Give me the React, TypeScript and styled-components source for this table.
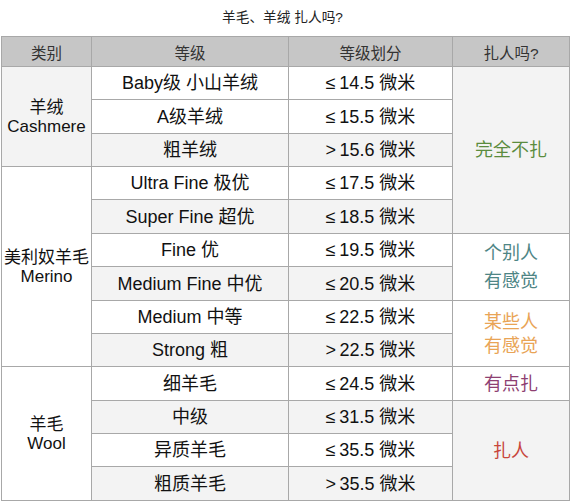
import React from 'react';
import styled, { createGlobalStyle } from 'styled-components';

const GlobalStyle = createGlobalStyle`
    body {
        margin: 0;
        background: #ffffff;
        font-family: "Liberation Sans", "Noto Sans CJK SC", sans-serif;
        color: #111;
    }
`;

const Page = styled.div`
    width: 571px;
    padding-left: 1px;
    box-sizing: border-box;
`;

const Title = styled.div`
    height: 36px;
    line-height: 36px;
    padding-right: 7px;
    text-align: center;
    font-size: 13.7px;
    color: #222;
`;

const Table = styled.div`
    display: grid;
    width: 569px;
    box-sizing: border-box;
    grid-template-columns: 89px 196px 163px 116px;
    grid-template-rows: 29px 32px 33px 32px 32px 33px 32px 33px 32px 32px 33px 32px 32px 33px;
    gap: 1px;
    padding: 1px;
    background: #a8a8a8;
`;

const Head = styled.div`
    display: flex;
    align-items: center;
    justify-content: center;
    background: #c6c6c6;
    color: #333;
    font-size: 15.5px;
`;

const Cell = styled.div<{ $span?: number; $shade?: boolean; $color?: string; $lh?: number; $size?: number }>`
    grid-row: span ${p => p.$span ?? 1};
    display: flex;
    flex-direction: column;
    align-items: center;
    justify-content: center;
    text-align: center;
    background: ${p => (p.$shade ? '#f3f3f3' : '#ffffff')};
    color: ${p => p.$color ?? '#111'};
    font-size: ${p => p.$size ?? 18}px;
    line-height: ${p => p.$lh ?? 20}px;
    white-space: nowrap;
`;

type Grade = { name: string; range: string };

const groups: { cat: string[]; shade: boolean; grades: Grade[] }[] = [
    {
        cat: ['羊绒', 'Cashmere'],
        shade: true,
        grades: [
            { name: 'Baby级 小山羊绒', range: '≤ 14.5 微米' },
            { name: 'A级羊绒', range: '≤ 15.5 微米' },
            { name: '粗羊绒', range: '> 15.6 微米' },
        ],
    },
    {
        cat: ['美利奴羊毛', 'Merino'],
        shade: false,
        grades: [
            { name: 'Ultra Fine 极优', range: '≤ 17.5 微米' },
            { name: 'Super Fine 超优', range: '≤ 18.5 微米' },
            { name: 'Fine 优', range: '≤ 19.5 微米' },
            { name: 'Medium Fine 中优', range: '≤ 20.5 微米' },
            { name: 'Medium 中等', range: '≤ 22.5 微米' },
            { name: 'Strong 粗', range: '> 22.5 微米' },
        ],
    },
    {
        cat: ['羊毛', 'Wool'],
        shade: false,
        grades: [
            { name: '细羊毛', range: '≤ 24.5 微米' },
            { name: '中级', range: '≤ 31.5 微米' },
            { name: '异质羊毛', range: '≤ 35.5 微米' },
            { name: '粗质羊毛', range: '> 35.5 微米' },
        ],
    },
];

// verdict column, keyed by the row it starts on
const verdicts: Record<number, { lines: string[]; span: number; color: string; shade: boolean; lh: number }> = {
    0: { lines: ['完全不扎'], span: 5, color: '#5b8c3e', shade: true, lh: 20 },
    5: { lines: ['个别人', '有感觉'], span: 2, color: '#4e8585', shade: false, lh: 28 },
    7: { lines: ['某些人', '有感觉'], span: 2, color: '#e9a456', shade: false, lh: 24 },
    9: { lines: ['有点扎'], span: 1, color: '#8e3f72', shade: false, lh: 20 },
    10: { lines: ['扎人'], span: 3, color: '#c8463c', shade: true, lh: 20 },
};

const Lines: React.FC<{ lines: string[] }> = ({ lines }) => (
    <>
        {lines.map(l => (
            <div key={l}>{l}</div>
        ))}
    </>
);

export default function App() {
    let row = 0;
    const cells: React.ReactNode[] = [];

    groups.forEach(g => {
        g.grades.forEach((gr, i) => {
            if (i === 0) {
                cells.push(
                    <Cell key={`c${row}`} $span={g.grades.length} $shade={g.shade} $lh={19} $size={17}>
                        <Lines lines={g.cat} />
                    </Cell>
                );
            }
            // rows 1 and 2 both white, then zebra
            const shade = row >= 2 && row % 2 === 0;
            cells.push(<Cell key={`g${row}`} $shade={shade}>{gr.name}</Cell>);
            cells.push(<Cell key={`r${row}`} $shade={shade}>{gr.range.replace(' ', '\u2009')}</Cell>);
            const v = verdicts[row];
            if (v) {
                cells.push(
                    <Cell key={`v${row}`} $span={v.span} $shade={v.shade} $color={v.color} $lh={v.lh}>
                        <Lines lines={v.lines} />
                    </Cell>
                );
            }
            row++;
        });
    });

    return (
        <Page>
            <GlobalStyle />
            <Title>羊毛、羊绒 扎人吗?</Title>
            <Table>
                <Head>类别</Head>
                <Head>等级</Head>
                <Head>等级划分</Head>
                <Head>扎人吗?</Head>
                {cells}
            </Table>
        </Page>
    );
}
